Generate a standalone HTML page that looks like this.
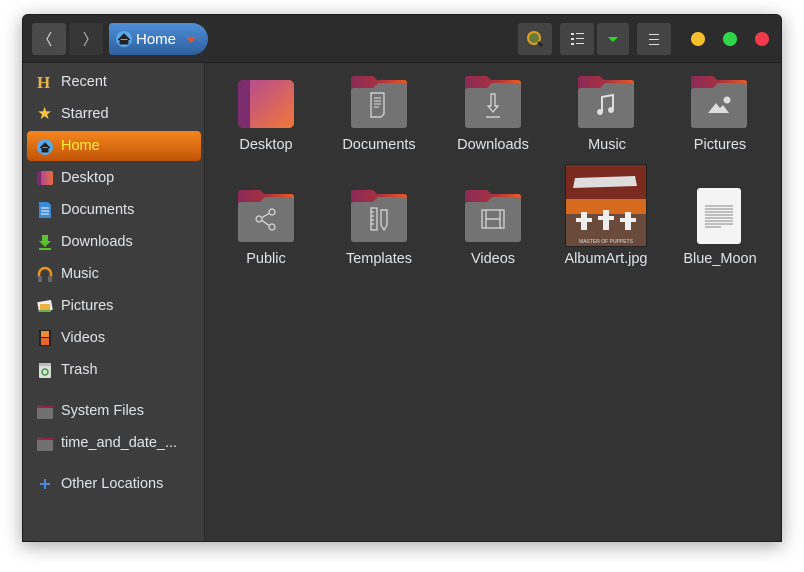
<!DOCTYPE html>
<html><head><meta charset="utf-8"><style>
*{margin:0;padding:0;box-sizing:border-box}
body{width:804px;height:572px;background:#fff;font-family:"Liberation Sans","DejaVu Sans",sans-serif;position:relative;overflow:hidden}
#win{position:absolute;left:22px;top:14px;width:760px;height:528px;background:#333;border:1px solid #1e1e1e;border-radius:6px 6px 0 0;box-shadow:0 4px 18px rgba(0,0,0,.35);overflow:hidden}
#hdr{position:absolute;left:0;top:0;width:760px;height:48px;background:#2c2c2c;border-bottom:1px solid #1f1f1f}
.btn{position:absolute;top:8px;height:32px;background:#444;border-radius:3px}
#side{position:absolute;left:0;top:48px;width:182px;height:480px;background:#3d3d3d;border-right:1px solid #2a2a2a}
.si{position:absolute;left:38px;font-size:14.5px;color:#dfe4ea;margin-top:1px}
.ic{position:absolute;left:14px;width:16px;height:16px;margin-top:1px}
.lab{position:absolute;width:110px;text-align:center;font-size:14.5px;color:#dfe4ea;margin-top:1px}
.f{position:absolute;width:56px;height:52px}
.dot{position:absolute;top:17px;width:14px;height:14px;border-radius:50%}
</style></head><body>
<div id="win">
<div id="hdr">
 <div class="btn" style="left:9px;width:34px;background:#4a4a4a"><svg width="34" height="32"><path d="M19 9 L15 16 L19 23" stroke="#cfcfcf" fill="none" stroke-width="1.2"/></svg></div>
 <div class="btn" style="left:46px;width:34px;background:#363636"><svg width="34" height="32"><path d="M15 9 L19 16 L15 23" stroke="#aaa" fill="none" stroke-width="1.2"/></svg></div>
 <div class="btn" style="left:86px;width:99px;background:linear-gradient(#4f8fd8,#2d5f9e);border-radius:3px 16px 16px 3px">
  <svg width="20" height="20" style="position:absolute;left:5px;top:6px"><circle cx="10" cy="10" r="8" fill="#5aa8e8"/><path d="M4 11 L10 5 L16 11 M6 10 V15 H14 V10" fill="#222" stroke="#222"/></svg>
  <span style="position:absolute;left:27px;top:8px;color:#fff;font-size:15px">Home</span>
  <svg width="10" height="6" style="position:absolute;left:77px;top:14px"><path d="M0 0 H10 L5 6Z" fill="#e8502a"/></svg>
 </div>
 <div class="btn" style="left:495px;width:34px"><svg width="34" height="32"><circle cx="16" cy="15" r="6" fill="#6a7a3a" stroke="#d8a020" stroke-width="2"/><path d="M20 19 L24 23" stroke="#222" stroke-width="2.5"/></svg></div>
 <div class="btn" style="left:537px;width:34px"><svg width="34" height="32"><g fill="#ddd"><rect x="11" y="10" width="3" height="2"/><rect x="11" y="15" width="3" height="2"/><rect x="11" y="20" width="3" height="2"/><rect x="16" y="10" width="8" height="1"/><rect x="16" y="15" width="8" height="1"/><rect x="16" y="20" width="8" height="1"/></g></svg></div>
 <div class="btn" style="left:574px;width:32px"><svg width="32" height="32"><path d="M11 14 H21 L16 19Z" fill="#22dd22"/></svg></div>
 <div class="btn" style="left:614px;width:34px"><svg width="34" height="32"><g fill="#ddd"><rect x="12" y="11" width="10" height="1"/><rect x="12" y="16" width="10" height="1"/><rect x="12" y="21" width="10" height="1"/></g></svg></div>
 <div class="dot" style="left:668px;background:#f6c02c"></div>
 <div class="dot" style="left:700px;background:#2fd64a"></div>
 <div class="dot" style="left:732px;background:#ef3b4a"></div>
</div>
<div id="side">
 <div style="position:absolute;left:4px;top:68px;width:174px;height:30px;border-radius:4px;background:linear-gradient(#f6861e,#c05406)"></div>
 <div class="ic" style="top:11px;color:#e8b34a;font-weight:bold;font-family:'Liberation Serif';font-size:17px;line-height:16px">H</div><div class="si" style="top:10px">Recent</div>
 <div class="ic" style="top:42px;color:#f5c242;font-size:17px;line-height:16px">★</div><div class="si" style="top:42px">Starred</div>
 <svg class="ic" style="top:75px"><circle cx="8" cy="8" r="8" fill="#5aa8e8"/><path d="M3 9 L8 4 L13 9 M5 8 V13 H11 V8" fill="#222" stroke="#222"/></svg><div class="si" style="top:74px;color:#ffef3a">Home</div>
 <div class="ic" style="top:107px;height:14px;border-radius:2px;background:linear-gradient(90deg,#7a2a6a 25%,#b04890 25%,#e96a40)"></div><div class="si" style="top:106px">Desktop</div>
 <svg class="ic" style="top:138px"><path d="M2 0 H11 L14 3 V16 H2Z" fill="#3a8ad8"/><g stroke="#fff"><path d="M4 6 H12 M4 9 H12 M4 12 H12"/></g></svg><div class="si" style="top:138px">Documents</div>
 <svg class="ic" style="top:170px"><path d="M5 1 H11 V7 H14 L8 13 L2 7 H5Z M2 14 H14 V16 H2Z" fill="#5cc22c"/></svg><div class="si" style="top:170px">Downloads</div>
 <svg class="ic" style="top:202px"><path d="M2 11 V8 A6 6 0 0 1 14 8 V11" stroke="#f0901e" stroke-width="2.5" fill="none"/><rect x="1" y="10" width="4" height="6" fill="#666"/><rect x="11" y="10" width="4" height="6" fill="#666"/></svg><div class="si" style="top:202px">Music</div>
 <svg class="ic" style="top:234px"><rect x="1" y="3" width="14" height="10" fill="#eee" transform="rotate(-10 8 8)"/><rect x="3" y="6" width="10" height="6" fill="#e8b040"/><rect x="2" y="12" width="12" height="2" fill="#6ab04a"/></svg><div class="si" style="top:234px">Pictures</div>
 <svg class="ic" style="top:266px"><rect x="2" y="0" width="12" height="16" fill="#222"/><rect x="4" y="1" width="8" height="6" fill="#f08a30"/><rect x="4" y="8" width="8" height="7" fill="#e8662a"/></svg><div class="si" style="top:266px">Videos</div>
 <svg class="ic" style="top:298px"><rect x="2" y="1" width="12" height="15" rx="1" fill="#ddd"/><rect x="2" y="1" width="12" height="3" fill="#bbb"/><circle cx="8" cy="10" r="3" fill="none" stroke="#3a9a3a" stroke-width="1.5"/></svg><div class="si" style="top:298px">Trash</div>
 <svg class="ic" style="top:339px"><path d="M0 2 H6 L7 3 H16 V15 H0Z" fill="#8b2a46"/><rect x="0" y="5" width="16" height="11" rx="1" fill="#707070"/></svg><div class="si" style="top:339px">System Files</div>
 <svg class="ic" style="top:371px"><path d="M0 2 H6 L7 3 H16 V15 H0Z" fill="#8b2a46"/><rect x="0" y="5" width="16" height="11" rx="1" fill="#707070"/></svg><div class="si" style="top:371px">time_and_date_...</div>
 <svg class="ic" style="top:412px"><path d="M8 3 V13 M3 8 H13" stroke="#4a8ad8" stroke-width="2"/></svg><div class="si" style="top:412px">Other Locations</div>
</div>
</div>
<svg width="0" height="0" style="position:absolute"><defs>
<linearGradient id="tg" x1="0" x2="1"><stop offset="0" stop-color="#8a2a58"/><stop offset=".5" stop-color="#a8303e"/><stop offset="1" stop-color="#ee5a22"/></linearGradient>
<linearGradient id="dg" x1="0" x2="1" y1="0" y2="1"><stop offset="0" stop-color="#b04898"/><stop offset="1" stop-color="#f27838"/></linearGradient>
<g id="fold"><path d="M3 0 H22 L26 4 H53 Q56 4 56 7 V20 H0 V3 Q0 0 3 0Z" fill="url(#tg)"/><path d="M0 15 Q0 12 3 12 H22 L27 7 H53 Q56 7 56 10 V49 Q56 52 53 52 H3 Q0 52 0 49Z" fill="#737373"/></g>
</defs></svg>
<svg class="f" style="left:238px;top:76px"><rect x="0" y="4" width="56" height="48" rx="5" fill="url(#dg)"/><path d="M5 4 H12 V52 H5 Q0 52 0 47 V9 Q0 4 5 4Z" fill="#7a2c6c"/></svg>
<div class="lab" style="left:211px;top:136px">Desktop</div>
<svg class="f" style="left:351px;top:76px"><use href="#fold"/><path d="M20 17 H33 V38 L30 41 H20Z" fill="none" stroke="#ddd" stroke-width="1.2"/><path d="M23 22 H30 M23 25 H30 M23 28 H30 M23 31 H28" stroke="#ddd"/></svg>
<div class="lab" style="left:324px;top:136px">Documents</div>
<svg class="f" style="left:465px;top:76px"><use href="#fold"/><path d="M26 18 V30 H23 L28 36 L33 30 H30 V18Z M21 41 H35" fill="none" stroke="#ddd" stroke-width="1.2"/></svg>
<div class="lab" style="left:438px;top:136px">Downloads</div>
<svg class="f" style="left:578px;top:76px"><use href="#fold"/><path d="M24 36 V21 L35 19 V33" fill="none" stroke="#ddd" stroke-width="2"/><circle cx="22" cy="36" r="3" fill="#ddd"/><circle cx="33" cy="34" r="3" fill="#ddd"/></svg>
<div class="lab" style="left:552px;top:136px">Music</div>
<svg class="f" style="left:691px;top:76px"><use href="#fold"/><path d="M17 37 L25 27 L29 32 L32 29 L38 37Z" fill="#ddd"/><circle cx="36" cy="24" r="3.5" fill="#ddd"/></svg>
<div class="lab" style="left:665px;top:136px">Pictures</div>
<svg class="f" style="left:238px;top:190px"><use href="#fold"/><g fill="none" stroke="#ddd" stroke-width="1.2"><circle cx="21" cy="29" r="3"/><circle cx="34" cy="22" r="3"/><circle cx="34" cy="37" r="3"/><path d="M24 27.5 L31 23.5 M24 30.5 L31 35.5"/></g></svg>
<div class="lab" style="left:211px;top:250px">Public</div>
<svg class="f" style="left:351px;top:190px"><use href="#fold"/><g fill="none" stroke="#ddd" stroke-width="1.2"><rect x="20" y="18" width="6" height="22"/><path d="M20 22 H23 M20 26 H23 M20 30 H23 M20 34 H23"/><path d="M30 20 H36 V35 L33 40 L30 35Z"/></g></svg>
<div class="lab" style="left:324px;top:250px">Templates</div>
<svg class="f" style="left:465px;top:190px"><use href="#fold"/><g fill="none" stroke="#ddd" stroke-width="1.2"><rect x="17" y="20" width="22" height="18"/><path d="M21 20 V38 M35 20 V38 M21 29 H35"/></g></svg>
<div class="lab" style="left:438px;top:250px">Videos</div>
<svg style="position:absolute;left:565px;top:164px" width="82" height="83"><rect width="82" height="83" fill="#222"/><rect x="1" y="1" width="80" height="81" fill="#7a2a1e"/><rect x="1" y="35" width="80" height="20" fill="#d66a1e"/><rect x="1" y="50" width="80" height="32" fill="#6a4a3a"/><path d="M10 14 L70 12 L72 22 L8 24Z" fill="#ddd"/><g fill="#eee"><path d="M16 48 h6 v6 h5 v4 h-5 v8 h-6 v-8 h-5 v-4 h5Z"/><path d="M38 46 h6 v6 h5 v4 h-5 v10 h-6 v-10 h-5 v-4 h5Z"/><path d="M60 48 h6 v6 h5 v4 h-5 v8 h-6 v-8 h-5 v-4 h5Z"/></g><text x="41" y="79" font-size="5" fill="#ddd" text-anchor="middle" font-family="Liberation Sans">MASTER OF PUPPETS</text></svg>
<div class="lab" style="left:551px;top:250px">AlbumArt.jpg</div>
<svg style="position:absolute;left:697px;top:188px" width="44" height="56"><rect width="44" height="56" rx="3" fill="#f4f4f4"/><g stroke="#888"><path d="M8 18 H36 M8 21 H36 M8 24 H36 M8 27 H36 M8 30 H36 M8 33 H36 M8 36 H36 M8 39 H24"/></g></svg>
<div class="lab" style="left:665px;top:250px">Blue_Moon</div>
</body></html>
